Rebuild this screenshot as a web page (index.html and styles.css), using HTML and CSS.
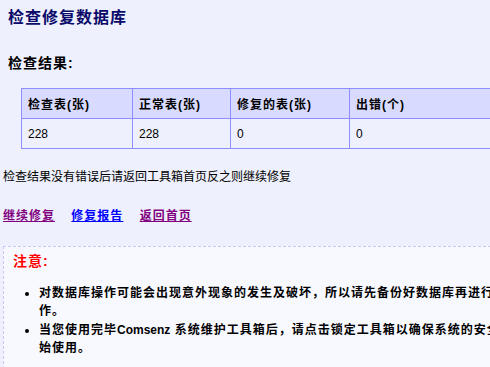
FILE: index.html
```html
<!DOCTYPE html>
<html lang="zh-CN">
<head>
    <meta charset="UTF-8">
    <title>检查修复数据库</title>
    <link rel="stylesheet" href="styles.css">
</head>
<body>
    <div class="main">
        <h2 class="title">检查修复数据库</h2>
        <h3 class="subtitle">检查结果:</h3>
        <table class="result">
            <tr>
                <th>检查表(张)</th>
                <th>正常表(张)</th>
                <th>修复的表(张)</th>
                <th>出错(个)</th>
            </tr>
            <tr>
                <td>228</td>
                <td>228</td>
                <td>0</td>
                <td>0</td>
            </tr>
        </table>
        <p class="tip">检查结果没有错误后请返回工具箱首页反之则继续修复</p>
        <div class="links">
            <a href="#" class="visited">继续修复</a>
            <a href="#">修复报告</a>
            <a href="#" class="visited">返回首页</a>
        </div>
        <div class="notice">
            <h4>注意:</h4>
            <ul>
                <li>对数据库操作可能会出现意外现象的发生及破坏，所以请先备份好数据库再进行操作。</li>
                <li>当您使用完毕<span class="en">Comsenz</span> 系统维护工具箱后，请点击锁定工具箱以确保系统的安全，开始使用。</li>
            </ul>
        </div>
    </div>
</body>
</html>
```

FILE: styles.css
```css
html, body {
    overflow: hidden;
}
body {
    margin: 0;
    background-color: #eef0fd;
    font-family: "Liberation Sans", "Noto Sans CJK SC", sans-serif;
    font-size: 12px;
    color: #000;
}
.main {
    width: 580px;
    padding: 8px 0 0 3px;
}
.title {
    margin: 0 0 0 5px;
    font-size: 16px;
    line-height: 20px;
    color: #0a0a6a;
    letter-spacing: 1px;
}
.subtitle {
    margin: 26px 0 0 5px;
    font-size: 14px;
    line-height: 18px;
    letter-spacing: 1px;
}
.result {
    margin: 16px 0 0 18px;
    width: 560px;
    border-collapse: collapse;
}
.result th,
.result td {
    border: 1px solid #8e8eff;
    height: 29px;
    padding: 0 6px;
    text-align: left;
    font-size: 12px;
}
.result th {
    background-color: #d8dbff;
    letter-spacing: 1px;
}
.result th:nth-child(1) { width: 98px; }
.result th:nth-child(2) { width: 85px; }
.result th:nth-child(3) { width: 106px; }
.tip {
    margin: 20px 0 0 0;
    line-height: 16px;
}
.links {
    margin-top: 23px;
    line-height: 16px;
}
.links a {
    font-weight: bold;
    color: #0000ff;
    margin-right: 13px;
    letter-spacing: 1px;
}
.links a.visited {
    color: #800080;
}
.notice {
    margin-top: 22px;
    width: 518px;
    padding: 5px 9px 10px 9px;
    background-color: #f8f8ff;
    border: 1px dashed #c8c8f2;
}
.notice h4 {
    margin: 0;
    color: #ff0000;
    font-size: 14px;
    line-height: 18px;
    letter-spacing: 1px;
}
.notice ul {
    margin: 14px 0 0 0;
    padding-left: 26px;
}
.notice li {
    font-weight: bold;
    line-height: 18px;
    margin-bottom: 1px;
    letter-spacing: 1px;
}
.notice li .en {
    letter-spacing: 0;
}
```
